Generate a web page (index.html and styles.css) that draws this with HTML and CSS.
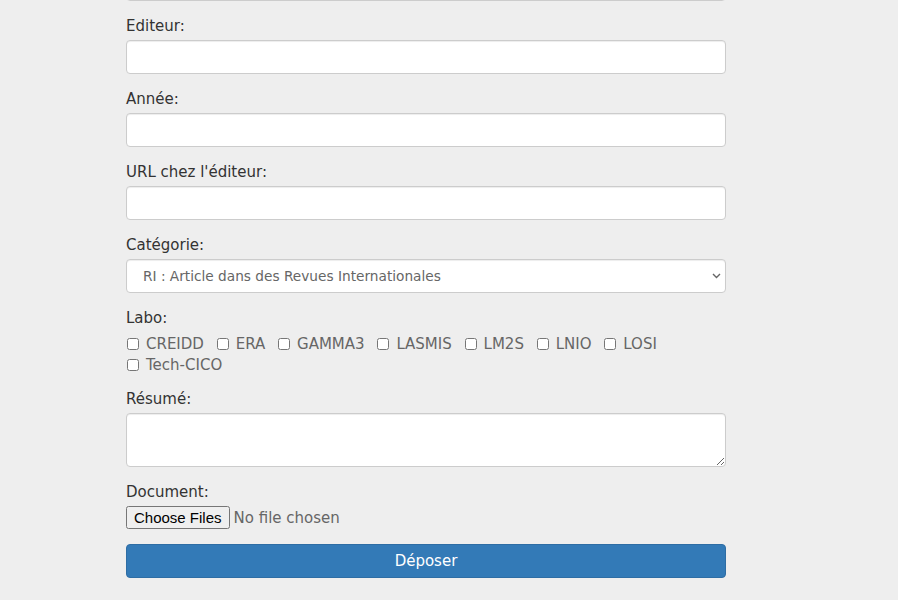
FILE: index.html
```html
<!DOCTYPE html>
<html lang="fr">
<head>
<meta charset="utf-8">
<link rel="stylesheet" href="styles.css">
</head>
<body>
<form class="form">
  <div class="group">
    <input class="control" type="text">
  </div>
  <div class="group">
    <label class="lbl">Editeur:</label>
    <input class="control" type="text">
  </div>
  <div class="group">
    <label class="lbl">Année:</label>
    <input class="control" type="text">
  </div>
  <div class="group">
    <label class="lbl">URL chez l'éditeur:</label>
    <input class="control" type="text">
  </div>
  <div class="group">
    <label class="lbl">Catégorie:</label>
    <div class="select-wrap">
      <select class="control select">
        <option>RI : Article dans des Revues Internationales</option>
      </select>
      <svg class="chev" width="9" height="6" viewBox="0 0 9 6"><path d="M1 1 L4.5 4.5 L8 1" fill="none" stroke="#666" stroke-width="1.4"/></svg>
    </div>
  </div>
  <div class="group">
    <label class="lbl">Labo:</label>
    <div class="checks">
      <label class="chk"><input type="checkbox">CREIDD</label>
      <label class="chk"><input type="checkbox">ERA</label>
      <label class="chk"><input type="checkbox">GAMMA3</label>
      <label class="chk"><input type="checkbox">LASMIS</label>
      <label class="chk"><input type="checkbox">LM2S</label>
      <label class="chk"><input type="checkbox">LNIO</label>
      <label class="chk"><input type="checkbox">LOSI</label>
      <label class="chk"><input type="checkbox">Tech-CICO</label>
    </div>
  </div>
  <div class="group">
    <label class="lbl">Résumé:</label>
    <textarea class="control area"></textarea>
  </div>
  <div class="group group-file">
    <label class="lbl">Document:</label>
    <input class="file" type="file" multiple>
  </div>
  <button class="btn" type="button">Déposer</button>
</form>
</body>
</html>
```
FILE: styles.css
```css
html, body {
  margin: 0;
  padding: 0;
  background: #eeeeee;
}
body {
  font-family: "DejaVu Sans", "Open Sans", sans-serif;
  color: #333333;
}
.form {
  width: 600px;
  margin: -33px 0 0 126px;
}
.group {
  margin-bottom: 13px;
}
.group-file {
  margin-bottom: 15px;
}
.lbl {
  display: block;
  font-size: 15px;
  line-height: 21px;
  height: 19px;
  padding-top: 2px;
  margin-bottom: 5px;
  color: #333333;
}
.control {
  display: block;
  box-sizing: border-box;
  width: 100%;
  height: 34px;
  margin: 0;
  padding: 6px 12px;
  border: 1px solid #cccccc;
  border-radius: 4px;
  background: #ffffff;
  font-family: inherit;
  font-size: 14px;
  color: #555555;
  box-shadow: inset 0 1px 1px rgba(0,0,0,0.075);
}
.select-wrap {
  position: relative;
}
.select {
  appearance: none;
  -webkit-appearance: none;
  padding-left: 16px;
  font-size: 13.7px;
  color: #666666;
}
.chev {
  position: absolute;
  right: 5px;
  top: 14px;
  pointer-events: none;
}
.area {
  height: 54px;
  resize: vertical;
}
.checks {
  font-size: 15px;
  line-height: 21px;
  color: #666666;
  padding-top: 2px;
  margin-bottom: -2px;
}
.chk {
  display: inline-block;
  margin-right: 7px;
}
.chk input {
  margin: 0 7px 0 1px;
  width: 12px;
  height: 12px;
  vertical-align: -1px;
}
.file {
  display: block;
  height: 23px;
  font-family: inherit;
  font-size: 15px;
  color: #666666;
}
.btn {
  display: block;
  box-sizing: border-box;
  width: 100%;
  height: 34px;
  border: 1px solid #2e6da4;
  border-radius: 4px;
  background: #337ab7;
  color: #ffffff;
  font-family: inherit;
  font-size: 15px;
}
```
